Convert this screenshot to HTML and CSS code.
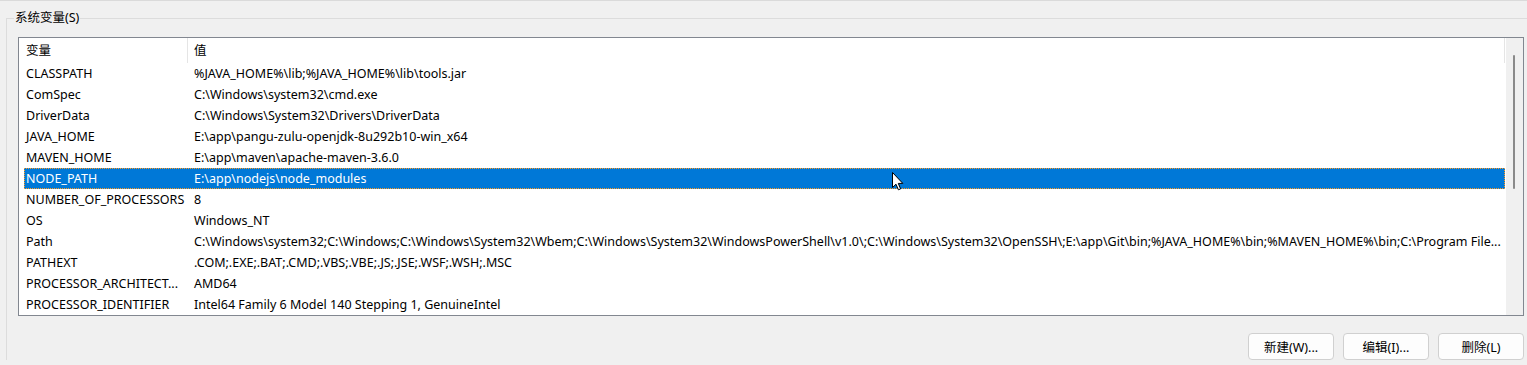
FILE: index.html
```html
<!DOCTYPE html>
<html>
<head>
    <title>系统变量</title>
    <link rel="stylesheet" href="styles.css">
</head>
<body>
    <div class="frame">
        <div class="group">
            <span class="group-title">系统变量(S)</span>
            <div class="list">
                <div class="list-body">
                    <div class="row list-head">
                        <div class="cell name">变量</div>
                        <div class="cell value">值</div>
                    </div>
                    <div class="row"><div class="cell name">CLASSPATH</div><div class="cell value">%JAVA_HOME%\lib;%JAVA_HOME%\lib\tools.jar</div></div>
                    <div class="row"><div class="cell name">ComSpec</div><div class="cell value">C:\Windows\system32\cmd.exe</div></div>
                    <div class="row"><div class="cell name">DriverData</div><div class="cell value">C:\Windows\System32\Drivers\DriverData</div></div>
                    <div class="row"><div class="cell name">JAVA_HOME</div><div class="cell value">E:\app\pangu-zulu-openjdk-8u292b10-win_x64</div></div>
                    <div class="row"><div class="cell name">MAVEN_HOME</div><div class="cell value">E:\app\maven\apache-maven-3.6.0</div></div>
                    <div class="row selected"><div class="cell name">NODE_PATH</div><div class="cell value">E:\app\nodejs\node_modules</div></div>
                    <div class="row"><div class="cell name">NUMBER_OF_PROCESSORS</div><div class="cell value">8</div></div>
                    <div class="row"><div class="cell name">OS</div><div class="cell value">Windows_NT</div></div>
                    <div class="row"><div class="cell name">Path</div><div class="cell value">C:\Windows\system32;C:\Windows;C:\Windows\System32\Wbem;C:\Windows\System32\WindowsPowerShell\v1.0\;C:\Windows\System32\OpenSSH\;E:\app\Git\bin;%JAVA_HOME%\bin;%MAVEN_HOME%\bin;C:\Program File...</div></div>
                    <div class="row"><div class="cell name">PATHEXT</div><div class="cell value">.COM;.EXE;.BAT;.CMD;.VBS;.VBE;.JS;.JSE;.WSF;.WSH;.MSC</div></div>
                    <div class="row"><div class="cell name">PROCESSOR_ARCHITECT...</div><div class="cell value">AMD64</div></div>
                    <div class="row"><div class="cell name">PROCESSOR_IDENTIFIER</div><div class="cell value">Intel64 Family 6 Model 140 Stepping 1, GenuineIntel</div></div>
                </div>
                <div class="scrollbar"><div class="thumb"></div></div>
            </div>
            <div class="actions">
                <button class="btn">新建(W)...</button>
                <button class="btn">编辑(I)...</button>
                <button class="btn">删除(L)</button>
            </div>
        </div>

        <!-- mouse pointer over the selected row -->
        <svg class="cursor" width="12" height="20" viewBox="0 0 12 20">
            <path d="M0.5 0.5 L0.5 15.5 L4 12.2 L6.4 17.8 L8.6 16.9 L6.3 11.4 L10.8 11.4 Z" fill="#fff" stroke="#000" stroke-width="1" stroke-linejoin="miter"/>
        </svg>
    </div>
</body>
</html>
```

FILE: styles.css
```css
body {
    margin: 0;
    background-color: #f0f0f0;
    font-family: "Noto Sans", "Noto Sans CJK SC", sans-serif;
    font-size: 12.5px;
    color: #000;
    overflow: hidden;
}
.frame {
    position: relative;
    height: 365px;
    border-top: 1px solid #dadada;
    box-sizing: border-box;
}
.group {
    position: relative;
    margin: 17px 0 0 6px;
    padding: 18px 3px 0 11px;
    border-top: 1px solid #dcdcdc;
    border-left: 1px solid #dcdcdc;
}
.group-title {
    position: absolute;
    left: 7px;
    top: -10px;
    padding: 0 1px;
    line-height: 18px;
    background-color: #f0f0f0;
}
.list {
    display: flex;
    height: 279px;
    border: 1px solid #828790;
    background-color: #fff;
    box-sizing: border-box;
}
.list-body {
    flex: 1;
    padding: 0 1px 0 5px;
}
.row {
    display: flex;
    height: 21px;
    line-height: 21px;
    white-space: nowrap;
}
.cell {
    overflow: hidden;
}
.cell.name {
    width: 164px;
    padding-left: 2px;
    box-sizing: border-box;
}
.cell.value {
    flex: 1;
    padding-left: 6px;
}
.list-head {
    height: 25px;
    line-height: 25px;
}
.list-head .cell.name {
    border-right: 1px solid #e5e5e5;
}
.list-head .cell.value {
    border-right: 1px solid #e5e5e5;
}
.row.selected {
    background-color: #0078d7;
    color: #fff;
    outline: 1px dotted #ff9a22;
    outline-offset: -1px;
}
.scrollbar {
    width: 17px;
    background-color: #f0f0f0;
}
.thumb {
    width: 2px;
    height: 134px;
    margin: 17px 0 0 7px;
    background-color: #8a8a8a;
    border-radius: 1px;
}
.actions {
    display: flex;
    justify-content: flex-end;
    gap: 9px;
    margin-top: 17px;
}
.btn {
    width: 86px;
    height: 27px;
    padding: 0;
    font-family: inherit;
    font-size: 12.5px;
    color: #000;
    background-color: #fdfdfd;
    border: 1px solid #d0d0d0;
    border-radius: 4px;
}
.cursor {
    position: absolute;
    left: 892px;
    top: 171px;
}
```
